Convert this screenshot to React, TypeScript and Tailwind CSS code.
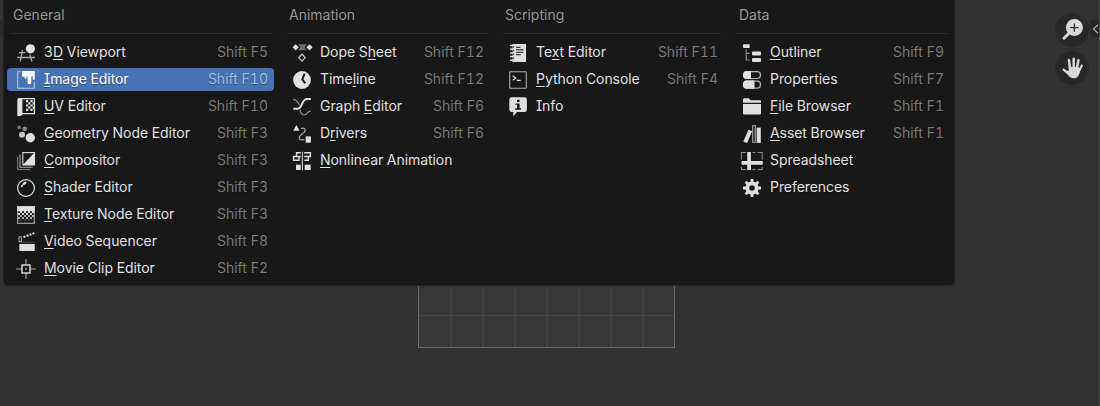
import type { ReactNode } from "react";

const W = "#e0e0e0";
const G = "#8a8a8a";
const D = "#181818";

const icons: Record<string, ReactNode> = {
  viewport: (
    <>
      <g stroke="#a8a8a8" strokeWidth="1.3" fill="none">
        <path d="M3 9.7H9.5M1.3 14.5H19M6.5 7L4.3 18.5M13.8 11.5L16 18.5" />
      </g>
      <circle cx="14.4" cy="5.8" r="4.6" fill={W} />
      <path d="M12 5.4Q12.2 3.6 14 3.2" stroke="#fff" strokeWidth="1" fill="none" />
    </>
  ),
  image: (
    <>
      <path d="M5 1.7H1.7V18.3H18.3V12" stroke="#b4c8ee" strokeWidth="1.1" fill="none" />
      <path d="M6 1H18.8V9.2Q17.7 10.2 16.7 9.2V6.2H15.3V13.2Q13.4 15.4 11.6 13.2V6.6H10.4V8.2Q9.5 9.2 8.6 8.2V6.8H6Z" fill="#fff" />
    </>
  ),
  uv: (
    <>
      <path d="M3.2 1H6.4V17.5Q5.5 19 3.7 19H1.3V3Q1.3 1 3.2 1Z" fill={W} />
      <path d="M6 1.6H18.4V16.6H6" stroke={W} strokeWidth="1.3" fill="none" />
      <path
        d="M10 3h2.2v2.2h-2.2zM14.4 3h2.2v2.2h-2.2zM12.2 5.2h2.2v2.2h-2.2zM10 7.4h2.2v2.2h-2.2zM14.4 7.4h2.2v2.2h-2.2zM12.2 9.6h2.2v2.2h-2.2zM10 11.8h2.2v2.2h-2.2zM14.4 11.8h2.2v2.2h-2.2zM16.6 5.2h1.6v2.2h-1.6zM16.6 9.6h1.6v2.2h-1.6z"
        fill={W}
      />
    </>
  ),
  geometry: (
    <>
      <circle cx="3.1" cy="3.4" r="1.9" fill="#777" />
      <circle cx="8.7" cy="4.8" r="2.3" fill="#8a8a8a" />
      <circle cx="6" cy="10.7" r="3" fill="#c4c4c4" />
      <circle cx="14.3" cy="13.8" r="4.7" fill={W} />
    </>
  ),
  compositor: (
    <>
      <path d="M1.6 5.5V18.5H14.5" stroke="#777" strokeWidth="1.1" fill="none" />
      <path d="M4 3.5V16.2H16.7" stroke="#aaa" strokeWidth="1.1" fill="none" />
      <rect x="6.8" y="1.6" width="11.7" height="12.2" fill={D} stroke={W} strokeWidth="1.1" />
      <path d="M18.7 1.3V14.3H6.5Z" fill={W} />
    </>
  ),
  shader: (
    <>
      <circle cx="10" cy="10" r="8.4" stroke={W} strokeWidth="1.2" fill="none" />
      <path d="M5.7 8.6L6.3 7.2" stroke={W} strokeWidth="1.5" strokeLinecap="round" />
      <path d="M7.8 5.9L9.3 4.8" stroke={W} strokeWidth="2.4" strokeLinecap="round" />
    </>
  ),
  texture: (
    <>
      <rect x="1.7" y="1.7" width="16.6" height="16.6" stroke="#b0b0b0" strokeWidth="1.1" fill="none" />
      <path d="M1.2 1.2H18.8V6.2H1.2Z" fill={W} />
      <path d="M4 6h2v2h-2zM8 6h2v2h-2zM12 6h2v2h-2zM16 6h2v2h-2zM2 8h2v2h-2zM6 8h2v2h-2zM10 8h2v2h-2zM14 8h2v2h-2z" fill={W} />
      <path d="M4 10h2v2h-2zM8 10h2v2h-2zM12 10h2v2h-2zM16 10h2v2h-2zM2 12h2v2h-2zM6 12h2v2h-2zM10 12h2v2h-2zM14 12h2v2h-2z" fill="#b0b0b0" />
      <path d="M4 14h2v2h-2zM8 14h2v2h-2zM12 14h2v2h-2z" fill="#444" />
    </>
  ),
  video: (
    <>
      <path d="M3.4 12H18.7V19H3.4Z" fill={W} />
      <path d="M4 11V10.3H18.5" stroke="#666" strokeWidth=".7" fill="none" />
      <rect x="3" y="4.8" width="2.4" height="4.8" stroke="#aaa" strokeWidth="1" fill="none" />
      <path d="M7.5 5.1L9.4 4.4M10.5 4L12.5 3.3M13.6 2.9L15.4 2.2M16.5 1.8L18.3 1.1" stroke={W} strokeWidth="2" />
    </>
  ),
  clip: (
    <>
      <path d="M10 .3V6M10 14V19.7M.3 10H6M14 10H19.7" stroke="#a8a8a8" strokeWidth="1.2" />
      <rect x="6" y="6" width="8" height="8" stroke={W} strokeWidth="1.4" fill="none" />
      <rect x="9.3" y="9.3" width="1.4" height="1.4" fill={W} />
    </>
  ),
  dope: (
    <>
      <path d="M6.5 1.3H14.5L12.8 4.3L14.5 7.3H6.5L8.2 4.3Z" fill="#6c6c6c" />
      <path d="M3.7 1.2L6.8 4.3L3.7 7.4L.6 4.3ZM17.5 1.2L20.6 4.3L17.5 7.4L14.4 4.3Z" fill={W} />
      <path d="M10 11.2L13.3 14.6L10 18L6.7 14.6Z" stroke="#c4c4c4" strokeWidth="1.3" fill="none" />
    </>
  ),
  timeline: (
    <>
      <circle cx="10" cy="10" r="8.9" fill={W} />
      <path d="M12.6 3.6L10.3 9.4L13.3 13.4" stroke={D} strokeWidth="1.9" fill="none" />
    </>
  ),
  graph: (
    <>
      <path d="M1.3 2.3Q4.5 2.6 6.4 6.2L7.5 8M8 13Q9 17.8 11.8 18Q14.3 18 15.8 15.5Q16.8 14.2 18.7 14.2" stroke="#999" strokeWidth="1.2" fill="none" />
      <path d="M1.3 11.8H5.5C10.5 11.8 9.5 2 15 2H18.8" stroke={W} strokeWidth="2" fill="none" />
    </>
  ),
  drivers: (
    <>
      <path d="M4.4 1L7.5 6.8H1.3Z" fill={W} />
      <path d="M9 4.8Q11 3.6 12.8 4.8Q14 6.2 12 8.4L8.2 11.8Q6.2 14 8.3 15.5Q9.6 16.3 12.3 15.7" stroke="#aaa" strokeWidth="1.2" fill="none" />
      <rect x="13.7" y="12.4" width="5.2" height="6.3" fill={W} />
    </>
  ),
  nla: (
    <>
      <path d="M10.4 .8V19.2" stroke="#c4c4c4" strokeWidth="1.2" />
      <path d="M8.7 1.8H4.5V5.5M8.7 5.5H1.6V9.3H7V5.5M12.2 1.8H18.4V5.5H12.2M12.4 9.3H16.4V5.5" stroke={W} strokeWidth="1.4" fill="none" />
      <rect x="4" y="13.7" width="4.7" height="5.3" fill={W} />
      <rect x="12.7" y="13.7" width="6" height="5.3" fill={W} />
    </>
  ),
  text: (
    <>
      <path d="M4.6 1H18V19H4.6Z" fill={W} />
      <path d="M2 2.5H5M2 6.2H5M2 9.9H5M2 13.6H5M2 17.3H5" stroke={W} strokeWidth="1.5" />
      <path d="M5.6 3V18" stroke={D} strokeWidth=".8" strokeDasharray="1.8 1.9" />
      <path d="M8 4.3H12.5M8 6.8H15.5M8 9.3H15.5M8 11.8H12.8" stroke={D} strokeWidth="1.1" />
    </>
  ),
  console: (
    <>
      <rect x="1.7" y="1.7" width="16.6" height="16.6" rx=".5" stroke="#aaa" strokeWidth="1.1" fill="none" />
      <path d="M4.7 5.7L7.7 7.9L4.7 10.2M8.7 10.4H12.7" stroke={W} strokeWidth="1.2" fill="none" />
    </>
  ),
  info: (
    <>
      <path d="M3.7 .3H16.5Q18.9 .3 18.9 2.7V12.5Q18.9 15 16.5 15H9L5.3 19.2V15H3.7Q1.3 15 1.3 12.5V2.7Q1.3 .3 3.7 .3Z" fill={W} />
      <path d="M9 2.7H11.6V4.9H9ZM7.5 6.4H11.6V11.2H13V12.7H7.2V11.2H9V7.8H7.5Z" fill={D} />
    </>
  ),
  outliner: (
    <>
      <path d="M4.2 6V17H7.7M4.2 10.4H7.7" stroke={G} strokeWidth="1.1" fill="none" />
      <rect x="1" y="1.2" width="6.7" height="3.8" rx=".8" fill={W} />
      <rect x="10" y="8.6" width="9" height="3.8" rx=".8" fill={W} />
      <rect x="10" y="15.1" width="9" height="3.8" rx=".8" fill={W} />
    </>
  ),
  properties: (
    <>
      <rect x="1.6" y="1.7" width="16.8" height="6.8" rx="3" stroke="#b4b4b4" strokeWidth="1.2" fill="none" />
      <rect x="1.6" y="11.2" width="16.8" height="7" rx="3" stroke="#b4b4b4" strokeWidth="1.2" fill="none" />
      <path d="M4.5 1.1H9V9.1H4.5Q1 9.1 1 5.1Q1 1.1 4.5 1.1ZM4.5 10.6H12.5V18.8H4.5Q1 18.8 1 14.7Q1 10.6 4.5 10.6Z" fill={W} />
    </>
  ),
  file: <path d="M1 5.7V2.2Q1 1.3 2 1.3H6.8L8.5 3.2H18Q19 3.2 19 4.2V5.7ZM1 7H19V16.6Q19 17.6 18 17.6H2Q1 17.6 1 16.6Z" fill={W} />,
  asset: (
    <>
      <path d="M6.5 5.8L10.1 7.3L5 19L1.3 17.4Z" fill={W} />
      <rect x="10.6" y="1.6" width="2.8" height="16.8" stroke="#999" strokeWidth="1.1" fill="#333" />
      <rect x="14.7" y="3.6" width="4.1" height="15.3" fill={W} />
    </>
  ),
  spreadsheet: (
    <>
      <path d="M4 1.5H-.5V8.5M-.5 16V18.5H4M10.5 1.5H13.5M15.5 1.5H20.2V8.5M20.2 16V18.5H15.5M13.5 18.5H10.5" stroke={G} strokeWidth="1.1" fill="none" />
      <path d="M5.2 1H8.9V10H20.7V13.8H8.9V19H5.2V13.8H-.5V10H5.2Z" fill={W} />
    </>
  ),
  gear: (
    <>
      <circle cx="10" cy="10" r="4.7" stroke={W} strokeWidth="3.8" fill="none" />
      <path d="M10 1V5M10 15V19M1 10H5M15 10H19M3.7 3.7L6.2 6.2M13.8 13.8L16.3 16.3M3.7 16.3L6.2 13.8M13.8 6.2L16.3 3.7" stroke={W} strokeWidth="2.8" />
    </>
  ),
};

type Item = { icon: string; label: string; accent?: number; keys?: string; active?: boolean };
type Column = { title: string; width: string; items: Item[] };

const columns: Column[] = [
  {
    title: "General",
    width: "w-[260px]",
    items: [
      { icon: "viewport", label: "3D Viewport", accent: 1, keys: "Shift F5" },
      { icon: "image", label: "Image Editor", accent: 0, keys: "Shift F10", active: true },
      { icon: "uv", label: "UV Editor", accent: 0, keys: "Shift F10" },
      { icon: "geometry", label: "Geometry Node Editor", accent: 0, keys: "Shift F3" },
      { icon: "compositor", label: "Compositor", accent: 0, keys: "Shift F3" },
      { icon: "shader", label: "Shader Editor", accent: 0, keys: "Shift F3" },
      { icon: "texture", label: "Texture Node Editor", accent: 0, keys: "Shift F3" },
      { icon: "video", label: "Video Sequencer", accent: 0, keys: "Shift F8" },
      { icon: "clip", label: "Movie Clip Editor", accent: 0, keys: "Shift F2" },
    ],
  },
  {
    title: "Animation",
    width: "w-[200px]",
    items: [
      { icon: "dope", label: "Dope Sheet", accent: 6, keys: "Shift F12" },
      { icon: "timeline", label: "Timeline", accent: 4, keys: "Shift F12" },
      { icon: "graph", label: "Graph Editor", accent: 6, keys: "Shift F6" },
      { icon: "drivers", label: "Drivers", accent: 1, keys: "Shift F6" },
      { icon: "nla", label: "Nonlinear Animation", accent: 0 },
    ],
  },
  {
    title: "Scripting",
    width: "w-[218px]",
    items: [
      { icon: "text", label: "Text Editor", accent: 2, keys: "Shift F11" },
      { icon: "console", label: "Python Console", accent: 0, keys: "Shift F4" },
      { icon: "info", label: "Info" },
    ],
  },
  {
    title: "Data",
    width: "w-[210px]",
    items: [
      { icon: "outliner", label: "Outliner", accent: 0, keys: "Shift F9" },
      { icon: "properties", label: "Properties", keys: "Shift F7" },
      { icon: "file", label: "File Browser", accent: 0, keys: "Shift F1" },
      { icon: "asset", label: "Asset Browser", accent: 0, keys: "Shift F1" },
      { icon: "spreadsheet", label: "Spreadsheet" },
      { icon: "gear", label: "Preferences" },
    ],
  },
];

function Label({ text, accent }: { text: string; accent?: number }) {
  if (accent === undefined) return <span>{text}</span>;
  return (
    <span>
      {text.slice(0, accent)}
      <span className="underline decoration-1 underline-offset-2 [text-decoration-skip-ink:none]">{text[accent]}</span>
      {text.slice(accent + 1)}
    </span>
  );
}

function Row({ icon, label, accent, keys, active }: Item) {
  return (
    <div
      className={
        "-mr-[3px] mb-1 -ml-1 flex h-[23px] items-center rounded pr-1.5 pl-[9px] " +
        (active ? "bg-[#4772b3] text-white" : "text-[#e2e2e2]")
      }
    >
      <svg className="mt-px h-5 w-5 shrink-0 overflow-visible" viewBox="0 0 20 20">
        {icons[icon]}
      </svg>
      <div className="mb-0.5 ml-2 flex-1 tracking-[-0.06px]">
        <Label text={label} accent={accent} />
      </div>
      {keys && <span className={active ? "mb-0.5 text-[#a5b9de]" : "mb-0.5 text-[#787878]"}>{keys}</span>}
    </div>
  );
}

export default function App() {
  return (
    <div className="relative h-[406px] w-[1100px] overflow-hidden border-r border-[#484848] bg-[#323232] font-['Inter',sans-serif] [font-feature-settings:'tnum','cv08']">
      <div className="absolute top-[220px] left-[418px] flex h-32 w-[257px] flex-col border border-[#6a6a6a] bg-[#383838]">
        {[0, 1, 2, 3].map((r) => (
          <div key={r} className={r === 3 ? "flex h-8" : "flex h-8 border-b border-[#464646]"}>
            {[0, 1, 2, 3, 4, 5, 6, 7].map((c) => (
              <div
                key={c}
                className={
                  c === 7
                    ? "w-[30px] shrink-0"
                    : c === 0
                      ? "w-[33px] shrink-0 border-r-2 border-[#414141]"
                      : "w-8 shrink-0 border-r-2 border-[#414141]"
                }
              />
            ))}
          </div>
        ))}
      </div>

      <div className="absolute top-5 left-0 h-[17px] w-1 rounded-r bg-[#282828]" />
      <div className="absolute top-5 right-0 flex h-[17px] w-[9px] items-center justify-end rounded-l bg-[#282828]">
        <svg className="h-[10px] w-[7px]" viewBox="0 0 7 10">
          <path d="M6 .8L1.5 5L6 9.2" stroke="#aaa" strokeWidth="1.2" fill="none" />
        </svg>
      </div>

      <div className="absolute top-[13px] left-[1055px] flex flex-col gap-1">
        <div className="h-[34px] w-[34px] rounded-full bg-[#282828]">
          <svg className="h-[34px] w-[34px]" viewBox="0 0 34 34">
            <path d="M9 25.2L15 19.2" stroke="#d8d8d8" strokeWidth="3" strokeLinecap="round" />
            <circle cx="19.4" cy="14.6" r="8.5" fill="#d8d8d8" />
            <path d="M15.2 14.6H23.6M19.4 10.4V18.8" stroke="#282828" strokeWidth="1.2" />
          </svg>
        </div>
        <div className="h-[34px] w-[34px] rounded-full bg-[#282828]">
          <svg className="h-[34px] w-[34px]" viewBox="0 0 34 34">
            <g stroke="#d8d8d8" strokeLinecap="round" strokeLinejoin="round" fill="none">
              <path d="M13.9 9L15 17M18.7 7.7V17M23.4 9.3L22 17" strokeWidth="2.5" />
              <path d="M26.8 14.8L23.7 20.5M8.6 18.6L14 22.8" strokeWidth="2.3" />
            </g>
            <path d="M13.6 16H23.4L25.5 18.5Q24 25.8 21 27Q17.5 27.8 14.8 26L9.6 20L14 19.5Z" fill="#d8d8d8" />
          </svg>
        </div>
      </div>

      <div className="absolute top-[-6px] left-[3px] h-[292px] w-[952px] rounded-[5px] border border-[#242424] bg-[#181818] pt-[5px] pl-[7px] text-[14px] leading-[23px] whitespace-nowrap shadow-[0_1px_2px_rgba(0,0,0,0.15)] [text-shadow:0_1px_1px_rgba(0,0,0,0.35)]">
        <div className="flex gap-4">
          {columns.map((col) => (
            <section key={col.title} className={col.width}>
              <h2 className="mb-[7px] h-[34px] border-b border-[#2d2d2d] pt-[3px] pl-0.5 text-[#989898]">{col.title}</h2>
              {col.items.map((item) => (
                <Row key={item.label} {...item} />
              ))}
            </section>
          ))}
        </div>
      </div>
    </div>
  );
}
